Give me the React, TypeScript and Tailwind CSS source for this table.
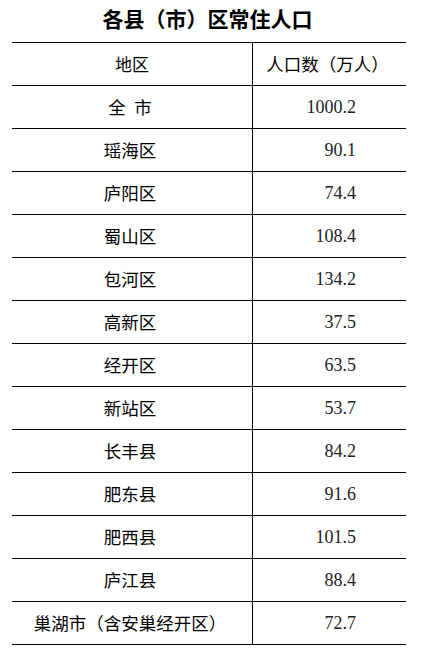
const rows: [string, string][] = [
  ["全\u2002市", "1000.2"],
  ["瑶海区", "90.1"],
  ["庐阳区", "74.4"],
  ["蜀山区", "108.4"],
  ["包河区", "134.2"],
  ["高新区", "37.5"],
  ["经开区", "63.5"],
  ["新站区", "53.7"],
  ["长丰县", "84.2"],
  ["肥东县", "91.6"],
  ["肥西县", "101.5"],
  ["庐江县", "88.4"],
  ["巢湖市（含安巢经开区）", "72.7"],
];

const cjk = "font-['Noto_Sans_CJK_SC',sans-serif]";

export default function App() {
  return (
    <div className="w-[425px] h-[661px] bg-white text-black">
      {/* Title */}
      <div className={`h-[42px] flex items-center justify-center pb-[4px] pr-[10px] text-[21px] font-bold ${cjk}`}>
        各县（市）区常住人口
      </div>

      {/* Table */}
      <div className="mx-[12px] w-[394px] border-t border-black">
        <div className="flex h-[43px] border-b border-black">
          <div className={`w-[240px] flex items-center justify-center text-[17px] ${cjk}`}>
            地区
          </div>
          <div className={`flex-1 border-l border-black flex items-center justify-center pr-[4px] text-[17.5px] ${cjk}`}>
            人口数（万人）
          </div>
        </div>

        {rows.map(([area, pop], i) => (
          <div key={i} className="flex h-[43px] border-b border-black">
            <div className={`w-[240px] flex items-center justify-center pr-[4px] text-[17.5px] ${cjk}`}>
              {area}
            </div>
            <div className="flex-1 border-l border-black flex items-center justify-end pr-[50px] text-[18px] text-[#222] font-['Liberation_Serif',serif]">
              {pop}
            </div>
          </div>
        ))}
      </div>
    </div>
  );
}
